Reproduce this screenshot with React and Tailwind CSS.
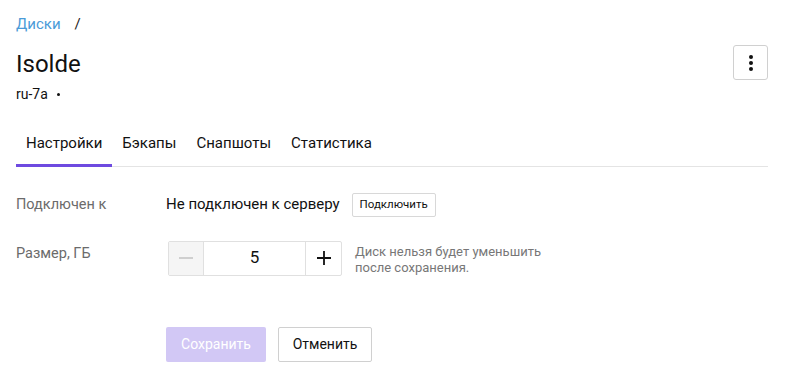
export default function App() {
  return (
    <div className="w-[786px] h-[378px] bg-white overflow-hidden" style={{ fontFamily: "Roboto, 'Liberation Sans', sans-serif" }}>
      <div className="pl-4 pr-[18px] pt-[13px]">
        <div className="flex items-center h-[22px] text-[15px]">
          <span className="text-[#4a9bd8]">Диски</span>
          <span className="ml-[14px] text-[#222]">/</span>
        </div>
        <div className="flex justify-between items-start mt-[10px]">
          <div className="pt-[4px]">
            <h1 className="text-[24px] leading-[30px] text-[#111] font-normal">Isolde</h1>
            <div className="flex items-center mt-[5px] text-[14px] leading-[20px] text-[#111]">
              <span>ru-7a</span>
              <span className="ml-[9px] w-[3px] h-[3px] rounded-full bg-[#111]"></span>
            </div>
          </div>
          <button className="w-[35px] h-[35px] border border-[#d0d0d0] rounded-[3px] flex flex-col items-center justify-center gap-[2px]">
            <span className="w-[4px] h-[4px] rounded-full bg-[#111]"></span>
            <span className="w-[4px] h-[4px] rounded-full bg-[#111]"></span>
            <span className="w-[4px] h-[4px] rounded-full bg-[#111]"></span>
          </button>
        </div>
        <div className="mt-[28px] flex border-b border-[#e4e4e4] text-[15px] text-[#111]">
          <div className="px-[10px] pb-[9px] border-b-[3px] border-[#6e4ae0] -mb-px">Настройки</div>
          <div className="px-[10px] pb-[9px]">Бэкапы</div>
          <div className="px-[10px] pb-[9px]">Снапшоты</div>
          <div className="px-[10px] pb-[9px]">Статистика</div>
        </div>
        <div className="mt-[26px] flex items-center h-[24px]">
          <div className="w-[150px] text-[14.5px] text-[#6b6b6b]">Подключен к</div>
          <div className="text-[15px] text-[#111]">Не подключен к серверу</div>
          <button className="ml-[12px] h-[24px] w-[84px] border border-[#d8d8d8] rounded-[2px] text-[11.5px] text-[#111]">Подключить</button>
        </div>
        <div className="mt-[24px] flex items-start">
          <div className="w-[152px] text-[14.5px] text-[#6b6b6b] pt-[2px]">Размер, ГБ</div>
          <div className="flex h-[35px] border border-[#e0e0e0] rounded-[2px]">
            <div className="w-[35px] bg-[#f5f5f5] border-r border-[#e0e0e0] flex items-center justify-center">
              <span className="w-[14px] h-[2px] bg-[#cfcfcf]"></span>
            </div>
            <div className="w-[101px] flex items-center justify-center text-[17px] text-[#111]">5</div>
            <div className="w-[36px] border-l border-[#e0e0e0] flex items-center justify-center">
              <svg width="14" height="14" viewBox="0 0 14 14"><path d="M7 0v14M0 7h14" stroke="#111" strokeWidth="1.8" /></svg>
            </div>
          </div>
          <div className="ml-[13px] text-[13px] leading-[16px] text-[#777] pt-[3px]">
            Диск нельзя будет уменьшить<br />после сохранения.
          </div>
        </div>
        <div className="mt-[51px] ml-[150px] flex gap-[12px]">
          <button className="w-[100px] h-[35px] rounded-[2px] bg-[#d2c8f5] text-white text-[14px]">Сохранить</button>
          <button className="w-[94px] h-[35px] rounded-[2px] border border-[#d0d0d0] text-[#111] text-[14px]">Отменить</button>
        </div>
      </div>
    </div>
  );
}
